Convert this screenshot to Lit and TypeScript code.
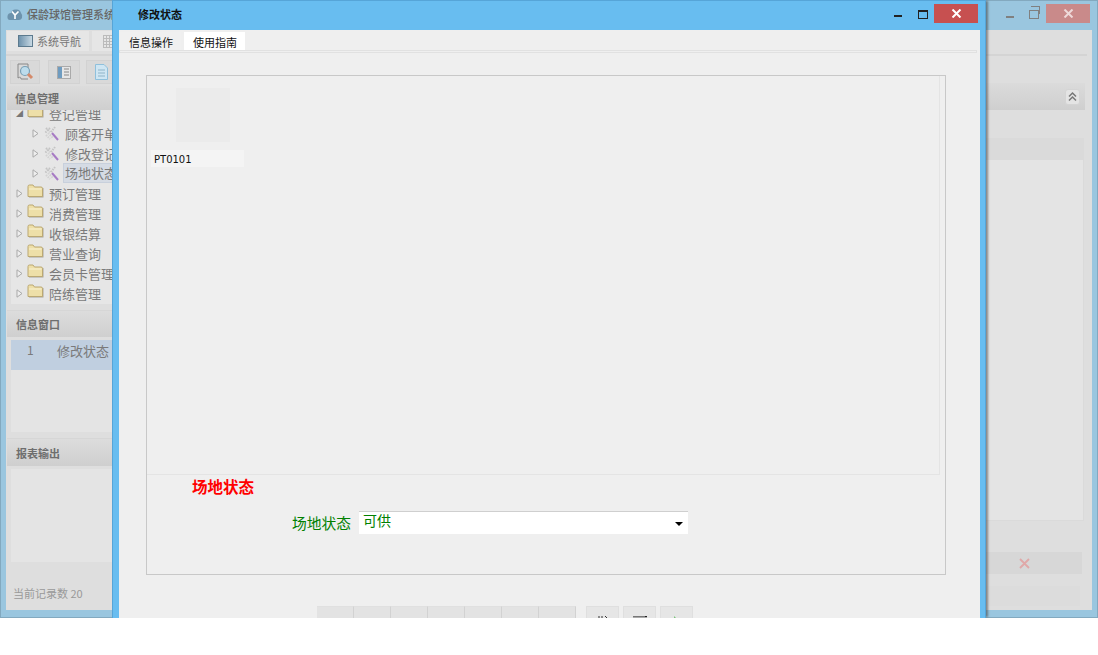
import { LitElement, html, css, svg } from "lit";
import { customElement } from "lit/decorators.js";

const folder = html`<svg class="ic fold" width="17" height="14" viewBox="0 0 17 14">
  <path d="M2 13.500H16.500V4H2Z" fill="#a9a49a"/>
  <path d="M1 12.500V2.500Q1 1 2.500 1H6L7.500 3H14Q15.500 3 15.500 4.500V12.500Z" fill="#eedfa8" stroke="#bba873"/>
  <path d="M2 5H14.500" stroke="#f8f1d0"/>
</svg>`;
const tool = html`<svg class="ic" width="17" height="17" viewBox="0 0 17 17">
  <path d="M3 3L7 7M7 3L2 8M8 7L12 2" stroke="#c4c4c4" stroke-width="2" stroke-dasharray="1.500 1" fill="none"/>
  <path d="M3 10L7 14M5 8L10 13" stroke="#d2d2d2" stroke-width="2" stroke-dasharray="1.500 1" fill="none"/>
  <path d="M9 8L15 15" stroke="#a77cc4" stroke-width="2" fill="none"/>
</svg>`;
const arrow = html`<svg class="arrow" width="7" height="9" viewBox="0 0 7 9"><path d="M1 .8L6 4.500L1 8.200Z" fill="#efefef" stroke="#a9a9a9"/></svg>`;
const closeX = (c: string) => svg`<svg width="11" height="9" viewBox="0 0 11 9"><path d="M1.500 .5L9.500 8.500M9.500 .5L1.500 8.500" stroke="${c}" stroke-width="2" fill="none"/></svg>`;

const folders = ["预订管理", "消费管理", "收银结算", "营业查询", "会员卡管理", "陪练管理"];

@customElement("app-root")
export class AppRoot extends LitElement {
  static styles = css`
    :host { display: block; width: 1098px; height: 655px; background: #fff; font-family: "Noto Sans CJK SC", "Liberation Sans", sans-serif; }
    .desktop { position: relative; width: 1098px; height: 618px; overflow: hidden; }
    .win { position: absolute; top: 0; box-sizing: border-box; }
    .back { left: 0; width: 1098px; height: 618px; background: #9ac6df; border: 1px solid #83a9bf; display: flex; flex-direction: column; }
    .back-title { height: 29px; flex: none; display: flex; align-items: center; padding: 0 0 3px 6px; box-sizing: border-box; gap: 4px; font-size: 11px; font-weight: 500; color: #666; white-space: nowrap; }
    .back-ctrl { position: absolute; right: 7px; top: 3px; display: flex; align-items: flex-start; }
    .back-min { width: 8px; height: 2px; background: #808080; margin: 12px 15px 0 0; }
    .rest { position: relative; width: 10px; height: 9px; border: 1.500px solid #808080; box-sizing: border-box; margin: 6px 7px 0 0; }
    .rest::after { content: ""; position: absolute; left: 1px; top: -5px; width: 9px; height: 8px; border: 1px solid #808080; border-left: none; border-bottom: none; box-sizing: border-box; }
    .close-b { width: 44px; height: 19px; background: #c98a8a; display: flex; align-items: center; justify-content: center; }
    .back-body { margin: 0 5px; flex: none; height: 580px; background: #dedede; display: flex; flex-direction: column; }
    .tabs0 { height: 23px; flex: none; display: flex; gap: 3px; padding: 1px 0 0 1px; border-bottom: 2px solid #d4d4d4; margin-right: 5px; }
    .tab0 { width: 82px; height: 20px; background: #e6e6e6; box-sizing: border-box; display: flex; align-items: center; gap: 4px; padding-left: 11px; font-size: 11px; color: #777; }
    .tab0.sm { width: 40px; }
    .nav-ic { width: 15px; height: 12px; background: linear-gradient(90deg, #6f93ad, #c7d8e3); border: 1px solid #5c7a8e; box-sizing: border-box; }
    .grid-ic { width: 15px; height: 13px; background: repeating-linear-gradient(90deg, #bbb 0 1px, transparent 1px 3px), repeating-linear-gradient(0deg, #bbb 0 1px, transparent 1px 3px); }
    .tools0 { height: 30px; flex: none; display: flex; padding: 4px 0 0 4px; box-sizing: border-box; }
    .t0 { width: 30px; height: 24px; background: #d9d9d9; border: 1px solid #d2d2d2; box-sizing: border-box; display: flex; align-items: center; justify-content: center; margin-right: 8px; }
    .t0.w2 { width: 32px; margin-right: 6px; }
    .cols { flex: 1; display: flex; min-height: 0; }
    .side { width: 120px; flex: none; display: flex; flex-direction: column; }
    .head { height: 24px; flex: none; box-sizing: border-box; margin-left: 1px; display: flex; align-items: center; padding-left: 8px; background: linear-gradient(#dcdcdc, #cfcfcf); font-size: 11px; font-weight: 700; color: #6e6e6e; }
    .head.h2 { height: 27px; border-top: 1px solid #d6d6d6; padding-left: 9px; }
    .head.h3 { height: 28px; }
    .tree { margin-left: 5px; height: 194px; flex: none; overflow: hidden; background: #e6e6e6; font-size: 13px; color: #7a7a7a; white-space: nowrap; }
    .row { height: 20px; display: flex; align-items: center; padding-left: 5px; }
    .row .ic { margin: 0 5px 0 4px; }
    .row.first { margin-top: -7px; }
    .row.sub { padding-left: 21px; }
    .row.sub .ic { margin: 0 3px 0 4px; }
    .row.sub span { padding: 0 2px; }
    .row.cur span { background: #d5dbe4; box-shadow: inset 0 0 0 1px #c8d0dc; height: 20px; line-height: 20px; }
    .arrow { flex: none; }
    .ic { flex: none; }
    .fold { position: relative; top: -2px; }
    .tri { width: 7px; flex: none; color: #777; font-size: 7px; }
    .list { margin: 3px 0 0 5px; height: 93px; flex: none; background: #e4e4e4; font-size: 13px; color: #7a7a7a; }
    .list.a { height: 92px; }
    .lrow { height: 30px; background: #c0cfe0; display: flex; padding-top: 1px; box-sizing: border-box; }
    .lnum { width: 46px; padding-left: 16px; box-sizing: border-box; font-size: 12px; }
    .gap6 { height: 6px; flex: none; }
    .foot { margin: 23px 0 0 7px; font-size: 11px; color: #999; white-space: nowrap; }
    .main { flex: 1; display: flex; flex-direction: column; align-items: stretch; }
    .mhead { height: 27px; margin-top: -3px; background: linear-gradient(#dbdbdb, #cfcfcf); flex: none; margin-right: 7px; display: flex; align-items: center; justify-content: flex-end; padding-right: 5px; box-sizing: border-box; }
    .up { width: 15px; height: 16px; background: #e4e4e4; border: 1px solid #d4d4d4; border-radius: 3px; box-sizing: border-box; display: flex; align-items: center; justify-content: center; }
    .mtable { margin: 28px 8px 0 0; height: 383px; flex: none; background: #e4e4e4; border: 1px solid #dadada; border-top-width: 22px; box-sizing: border-box; }
    .mstrip { margin: 31px 10px 0 0; height: 22px; flex: none; background: #d7d7d7; display: flex; align-items: center; }
    .mstrip svg { margin-left: 893px; }
    .mband { margin: 12px 12px 0 0; height: 20px; flex: none; background: #dcdcdc; }
    .front { left: 112px; width: 874px; height: 618px; background: #68bdf0; border: 1px solid #56a5d8; border-bottom: none; box-shadow: 3px 0 2px -1px rgba(60,60,60,.55); display: flex; flex-direction: column; }
    .f-title { height: 29px; flex: none; display: flex; align-items: center; padding: 0 0 3px 25px; box-sizing: border-box; font-size: 11px; font-weight: 700; color: #111; position: relative; }
    .f-ctrl { position: absolute; right: 7px; top: 3px; display: flex; align-items: flex-start; }
    .f-min { width: 8px; height: 2px; background: #222; margin: 11px 16px 0 0; }
    .f-max { width: 10px; height: 9px; border: 1.500px solid #222; border-top-width: 2px; box-sizing: border-box; margin: 6px 6px 0 0; }
    .f-close { width: 44px; height: 19px; background: #c75050; display: flex; align-items: center; justify-content: center; }
    .f-body { flex: 1; margin: 0 5px 0 6px; background: #efefef; display: flex; flex-direction: column; min-height: 0; }
    .tabs { height: 20px; flex: none; display: flex; gap: 3px; padding: 2px 0 0 1px; box-sizing: border-box; font-size: 11px; color: #111; }
    .tab { width: 61px; height: 19px; display: flex; align-items: center; justify-content: center; background: #f0f0f0; padding-left: 1px; box-sizing: border-box; }
    .tab.on { background: #fff; }
    .rule { height: 3px; box-sizing: border-box; border: 1px solid #e1e1e1; margin-right: 3px; flex: none; }
    .panel { margin: 22px 0 0 27px; width: 800px; height: 500px; flex: none; box-sizing: border-box; border: 1px solid #c8c8c8; background: #efefef; display: flex; flex-direction: column; }
    .stage { height: 399px; flex: none; box-sizing: border-box; border-right: 1px solid #e4e4e4; border-bottom: 1px solid #e4e4e4; margin-right: 5px; padding: 12px 0 0 4px; }
    .thumb { width: 54px; height: 54px; background: #ebebeb; margin-left: 25px; }
    .plabel { width: 93px; height: 17px; margin-top: 8px; background: #f4f4f4; display: flex; align-items: center; padding: 1px 0 0 3px; box-sizing: border-box; font: 10px "DejaVu Sans", sans-serif; color: #111; }
    .form { flex: 1; }
    .sec { color: #f00; font-size: 15.500px; font-weight: 700; margin: 0 0 0 45px; line-height: 22px; }
    .field { display: flex; margin: 14px 0 0 145px; }
    .flab { color: #008000; font-size: 14.750px; margin-top: 1px; line-height: 22px; width: 67px; white-space: nowrap; }
    .pick { width: 329px; height: 23px; background: #fff; border-top: 1px solid #cfcfcf; box-sizing: border-box; display: flex; justify-content: space-between; padding: 0 5px 0 4px; }
    .pick b { font-weight: 400; font-size: 14px; color: #008000; line-height: 17px; }
    .caret { width: 0; height: 0; border: 4px solid transparent; border-top: 4px solid #000; border-bottom: 0; margin-top: 10px; }
    .btns { display: flex; margin: 31px 0 0 198px; flex: none; }
    .b { width: 37px; height: 30px; box-sizing: border-box; background: #e3e3e3; border-right: 1px solid #d2d2d2; border-top: 1px solid #e0e0e0; }
    .b2 { width: 33px; height: 30px; box-sizing: border-box; background: #e6e6e6; border: 1px solid #dfdfdf; margin-left: 4px; display: flex; justify-content: center; padding-top: 9px; }
    .b2.first { margin-left: 10px; }
  `;

  render() {
    return html`<div class="desktop">
      <div class="win back">
        <div class="back-title">
          <svg width="16" height="13" viewBox="0 0 16 13"><path d="M3 12Q0 12 .5 8Q1 5 4 5Q5 1 9 1.500Q13 1 14 5Q16 7 15 10Q14 12 12 12Z" fill="#6d93ad"/><path d="M5 3.500L8 7L11.500 3.500M8 7V11" stroke="#fff" stroke-width="1.600" fill="none"/></svg>
          <span>保龄球馆管理系统</span>
        </div>
        <div class="back-ctrl">
          <i class="back-min"></i>
          <i class="rest"></i>
          <div class="close-b">${closeX("#eed9d9")}</div>
        </div>
        <div class="back-body">
          <div class="tabs0">
            <div class="tab0"><i class="nav-ic"></i>系统导航</div>
            <div class="tab0 sm"><i class="grid-ic"></i></div>
          </div>
          <div class="tools0">
            <div class="t0"><svg width="18" height="19" viewBox="0 0 18 19"><path d="M2 1H12V6M2 1V15M2 15Q5 13 5 16H12" fill="none" stroke="#888"/><circle cx="9" cy="8" r="4.500" fill="#bcdcec" stroke="#7aa0b5" stroke-width="1.200"/><path d="M12 11L16 15" stroke="#d58a6a" stroke-width="3"/></svg></div>
            <div class="t0 w2"><svg width="14" height="13" viewBox="0 0 14 13"><rect x=".5" y=".5" width="13" height="12" fill="#e6e6e6" stroke="#aaa"/><rect x="1" y="1" width="4" height="11" fill="#6f9cc0"/><path d="M7 3H12M7 6H12M7 9H12" stroke="#888"/></svg></div>
            <div class="t0"><svg width="13" height="16" viewBox="0 0 13 16"><path d="M.5.5H9L12.500 4V15.500H.5Z" fill="#cfe6f3" stroke="#8fc0dc"/><path d="M3 6H10M3 9H10M3 12H10" stroke="#8fb4c8"/></svg></div>
          </div>
          <div class="cols">
            <div class="side">
              <div class="head">信息管理</div>
              <div class="tree">
                <div class="row first"><span class="tri">◢</span>${folder}登记管理</div>
                ${["顾客开单", "修改登记", "场地状态"].map((t, i) => html`<div class="row sub ${i === 2 ? "cur" : ""}">${arrow}${tool}<span>${t}</span></div>`)}
                ${folders.map((t) => html`<div class="row">${arrow}${folder}${t}</div>`)}
              </div>
              <div class="gap6"></div>
              <div class="head h2">信息窗口</div>
              <div class="list a"><div class="lrow"><div class="lnum">1</div>修改状态</div></div>
              <div class="gap6"></div>
              <div class="head h2 h3">报表输出</div>
              <div class="list"></div>
              <div class="foot">当前记录数 20</div>
            </div>
            <div class="main">
              <div class="mhead"><div class="up"><svg width="11" height="11" viewBox="0 0 11 11"><path d="M2 5.500L5.500 2L9 5.500M2 9.500L5.500 6L9 9.500" stroke="#777" stroke-width="1.500" fill="none"/></svg></div></div>
              <div class="mtable"></div>
              <div class="mstrip"><svg width="11" height="11" viewBox="0 0 11 11"><path d="M1 1L10 10M10 1L1 10" stroke="#e0a8a8" stroke-width="1.800"/></svg></div>
              <div class="mband"></div>
            </div>
          </div>
        </div>
      </div>
      <div class="win front">
        <div class="f-title">修改状态
          <div class="f-ctrl"><i class="f-min"></i><i class="f-max"></i><div class="f-close">${closeX("#fff")}</div></div>
        </div>
        <div class="f-body">
          <div class="tabs"><div class="tab">信息操作</div><div class="tab on">使用指南</div></div>
          <div class="rule"></div>
          <div class="panel">
            <div class="stage"><div class="thumb"></div><div class="plabel">PT0101</div></div>
            <div class="form">
              <div class="sec">场地状态</div>
              <div class="field"><div class="flab">场地状态</div><div class="pick"><b>可供</b><i class="caret"></i></div></div>
            </div>
          </div>
          <div class="btns">
            ${[0, 1, 2, 3, 4, 5, 6].map(() => html`<div class="b"></div>`)}
            <div class="b2 first"><svg width="14" height="12" viewBox="0 0 14 12"><path d="M3 0V10M6 0V10M9 0L12 3L9 6" stroke="#333" fill="none"/></svg></div>
            <div class="b2"><svg width="16" height="12" viewBox="0 0 16 12"><path d="M1 .5H15" stroke="#777"/><path d="M14 0V2" stroke="#222" stroke-width="2"/><rect x="1.500" y="1.500" width="13" height="9" fill="none" stroke="#aaa"/></svg></div>
            <div class="b2"><svg width="14" height="12" viewBox="0 0 14 12"><path d="M4 0L9 5L4 10Z" fill="#7cc47c"/></svg></div>
          </div>
        </div>
      </div>
    </div>`;
  }
}
